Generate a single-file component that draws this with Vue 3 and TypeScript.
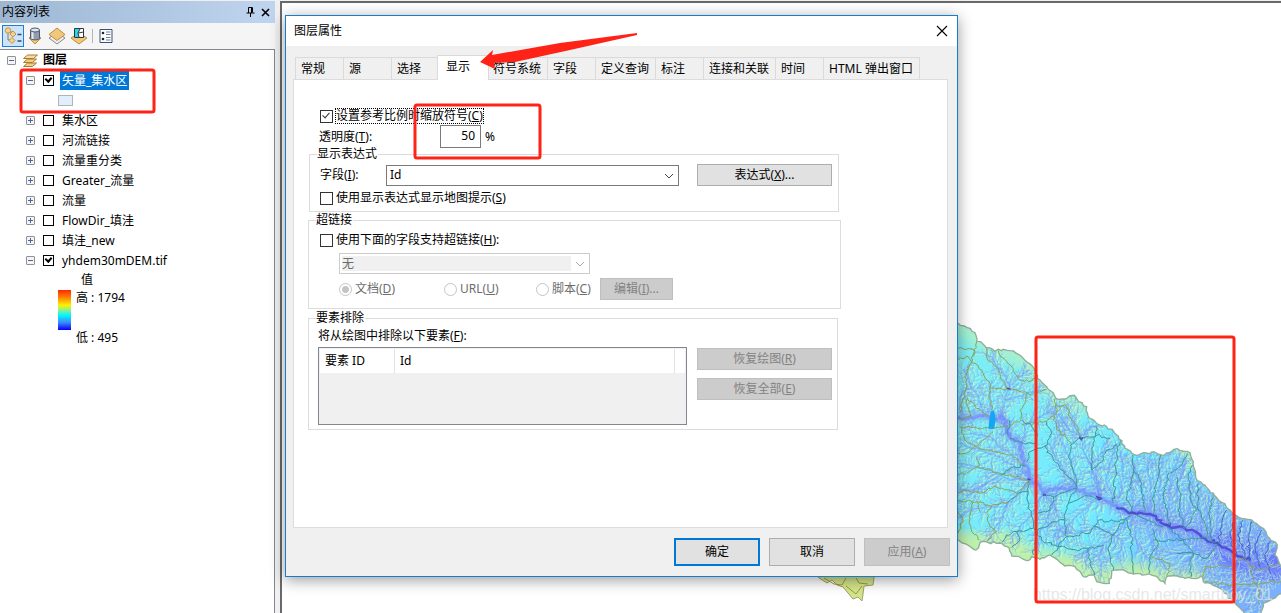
<script setup lang="ts">
import { ref } from 'vue'

interface Layer { name: string; checked: boolean; open: boolean; selected?: boolean }
type Pt = [number, number]

const layers = ref<Layer[]>([
  { name: '矢量_集水区', checked: true, open: true, selected: true },
  { name: '集水区', checked: false, open: false },
  { name: '河流链接', checked: false, open: false },
  { name: '流量重分类', checked: false, open: false },
  { name: 'Greater_流量', checked: false, open: false },
  { name: '流量', checked: false, open: false },
  { name: 'FlowDir_填洼', checked: false, open: false },
  { name: '填洼_new', checked: false, open: false },
  { name: 'yhdem30mDEM.tif', checked: true, open: true },
])

const tabs = ['常规', '源', '选择', '显示', '符号系统', '字段', '定义查询', '标注', '连接和关联', '时间', 'HTML 弹出窗口']
const activeTab = ref('显示')
const scaleSymbols = ref(true)
const mapTips = ref(false)
const hyperlinks = ref(false)
const transparency = ref('50')

let seed = 7
function rand(): number {
  seed = (seed * 16807) % 2147483647
  return seed / 2147483647
}

function parse(s: string): Pt[] {
  return s.split(' ').map((p) => p.split(',').map(Number) as Pt)
}

/* Midpoint displacement gives terrain lines their ragged look. */
function rough(pts: Pt[], amount: number): Pt[] {
  const out: Pt[] = [pts[0]]
  for (let i = 1; i < pts.length; i++) {
    const [ax, ay] = pts[i - 1]
    const [bx, by] = pts[i]
    const n = Math.max(1, Math.round(Math.hypot(bx - ax, by - ay) / 9))
    for (let k = 1; k <= n; k++) {
      const t = k / n
      const j = k === n ? 0 : amount
      out.push([ax + (bx - ax) * t + (rand() - 0.5) * j, ay + (by - ay) * t + (rand() - 0.5) * j])
    }
  }
  return out
}

function toPath(pts: Pt[]): string {
  return 'M' + pts.map(([x, y]) => `${x.toFixed(0)} ${y.toFixed(0)}`).join('L')
}

const outline = toPath(rough(parse('0,32 24,40 50,52 75,68 80,94 92,95 108,112 128,118 134,124 145,118 180,122 205,133 232,157 252,175 262,205 290,230 318,265 352,264 372,256 385,275 410,290 413,315 448,345 470,350 505,378 525,415 555,435 605,426 640,437 682,416 712,424 730,455 742,512 765,525 795,558 848,610 875,625 905,630 940,655 962,690 982,705 975,735 993,770 1000,850 965,868 940,880 935,915 885,915 855,880 825,850 800,830 760,815 755,798 725,805 655,798 645,820 625,805 597,792 550,792 520,780 485,783 478,820 440,815 432,795 400,800 375,770 345,768 300,735 270,748 245,740 235,752 185,738 178,715 155,700 95,695 78,720 24,690 0,680'), 7)) + 'Z'

const riverPts = parse('0,325 24,322 120,322 160,325 180,385 215,400 215,440 240,505 280,550 330,535 380,535 430,550 500,590 550,608 600,612 640,642 700,655 760,680 805,705 850,730 900,755 1000,790')
const river = toPath(rough(riverPts, 14))
const channel = toPath(rough(parse('500,592 545,608 600,612 620,630 645,645 705,656 765,685 810,706 870,740 900,752'), 12))

const streamPts: Pt[][] = [
  '180,385 150,320 165,270 178,235 170,200 130,150 110,130',
  '178,235 205,200 240,180', '100,320 85,260 60,220 40,180', '165,270 230,250 285,240',
  '215,400 230,340 290,310 310,290', '125,320 120,250 125,210',
  '240,505 190,510 155,495 80,470 24,460', '155,495 110,520 50,560',
  '240,505 200,560 175,575 125,590 60,600 24,620', '175,575 160,620 130,660 115,690',
  '240,505 150,440 90,420 30,400', '215,440 160,420 120,380 60,370',
  '280,550 250,610 210,650 180,700', '280,550 320,600 330,660 320,710', '330,535 300,600 270,670 260,720',
  '380,535 340,480 310,430 295,400', '380,535 360,440 330,390 320,300',
  '430,485 400,420 392,385 370,340 350,280', '450,560 425,485 435,450 480,400', '392,385 420,350 440,350',
  '392,385 350,350 325,310', '450,560 440,500 425,485', '500,590 470,520 480,460 500,400',
  '500,590 520,500 510,420', '550,608 545,520 555,460', '600,612 570,530 550,450',
  '600,612 600,540 595,480 605,430', '640,642 625,560 630,500 635,440', '650,642 660,570 660,500 690,430',
  '700,655 690,590 680,520 710,450', '700,655 720,580 720,500', '760,680 745,600 745,540',
  '780,685 770,620 775,560', '805,705 800,640 805,580', '850,730 835,670 830,620',
  '870,740 860,680 865,640', '900,755 885,700 885,650', '920,760 915,700 920,660', '950,770 940,730 950,690',
  '550,608 490,675 460,705 415,720 370,740', '490,675 440,650 380,670 300,660', '490,675 520,700 500,750',
  '460,705 450,750 455,800', '415,720 410,770', '450,560 400,600 360,640 340,680', '550,608 560,690 590,750',
  '640,642 600,680 610,720 650,780', '805,705 730,730 680,730 620,720', '730,730 700,770 690,795',
  '805,705 790,750 760,790', '900,755 870,790 810,800 780,790', '960,780 930,840 910,900',
  '930,840 870,835 820,830', '950,775 925,800 890,820', '40,320 30,270 40,240', '0,540 70,540 110,520',
].map(parse)
const streams = streamPts.map((s) => toPath(rough(s, 8)))

/* Feathered gullies on both sides of every stream. */
const veinSegments: string[] = []
function grow(x: number, y: number, angle: number, length: number, depth: number): void {
  const steps = Math.ceil(length / 6)
  let d = `M${x.toFixed(0)} ${y.toFixed(0)}`
  for (let i = 0; i < steps; i++) {
    angle += (rand() - 0.5) * 0.6
    x += Math.cos(angle) * 6
    y += Math.sin(angle) * 6
    d += `L${x.toFixed(0)} ${y.toFixed(0)}`
    if (depth > 0 && i % 2 === 1) {
      grow(x, y, angle + (rand() < 0.5 ? -0.7 : 0.7), length * 0.4, depth - 1)
    }
  }
  veinSegments.push(d)
}
for (const s of [riverPts, ...streamPts]) {
  for (let i = 1; i < s.length; i++) {
    const [ax, ay] = s[i - 1]
    const [bx, by] = s[i]
    const len = Math.hypot(bx - ax, by - ay)
    const dir = Math.atan2(by - ay, bx - ax)
    for (let t = 0; t < len; t += 14) {
      for (const side of [-1, 1]) {
        grow(ax + ((bx - ax) * t) / len, ay + ((by - ay) * t) / len, dir + side * (0.5 + rand() * 0.4), 18 + rand() * 26, 1)
      }
    }
  }
}
const veins = veinSegments.join('')

const basins = [
  '24,115 70,118 68,150 50,180 45,260 28,310', '24,150 50,138 75,160 118,215 120,235 178,238',
  '80,95 70,140', '108,112 112,145 150,190 170,235', '145,122 180,165 205,205 235,215 262,205',
  '178,238 225,245 240,255 290,238', '230,250 228,275 210,300 213,330 180,345',
  '50,262 75,290 115,320', '118,235 125,300', '178,330 175,378', '24,325 60,322 50,270',
  '180,385 220,400 258,400', '28,350 70,352 125,355 175,345', '35,350 45,390 80,410 130,425 185,435 225,468',
  '24,430 60,425 85,405 130,365', '24,495 50,490 90,465 78,440', '24,545 60,545 100,548 130,530 200,550 240,510',
  '24,572 80,575 125,588 175,575', '25,605 40,635 24,670', '70,575 58,620 65,665 85,690',
  '125,588 110,610 120,650 140,665 110,695', '80,575 90,605', '175,575 205,550 235,545', '235,510 232,570 245,620 260,665 250,735',
  '155,698 170,675 200,665 250,655', '200,665 210,690 185,712', '80,470 150,490 240,510', '155,492 190,470 225,468',
  '315,265 320,310 285,335 215,345', '318,285 350,290 360,320 392,380', '310,315 320,360 365,400',
  '290,335 305,370 285,410 310,450 380,530', '392,385 362,405 355,440 372,490 380,530', '440,350 430,400 425,480',
  '425,480 455,455 470,420 500,405', '510,385 500,430 498,480 490,580', '392,385 440,375 480,385',
  '548,435 550,490 530,560 550,608', '550,480 575,520 585,610', '632,435 625,500 612,550 610,612',
  '712,430 690,470 655,490 640,560 655,645', '680,500 692,560 685,600 705,655', '728,465 715,500 720,560 740,600 705,655',
  '745,520 742,590 765,640 770,680', '790,560 775,610 785,690', '830,600 815,650 805,700',
  '855,615 840,680 860,740', '880,630 865,670 885,740', '905,635 895,690 900,750', '935,660 915,710 930,770', '960,695 945,740 965,790',
  '280,550 310,560 380,535', '380,535 355,580 345,625 350,680 325,710', '350,680 420,670 430,650 490,675',
  '345,625 300,640 262,665', '262,665 275,690 325,710 305,735', '490,675 510,640 545,615',
  '430,650 445,630 500,635 530,625', '490,675 475,720 490,780', '415,715 420,760 435,795', '325,710 390,720 415,715 460,705',
  '530,630 545,680 545,750 550,790', '550,610 640,650', '610,660 625,700 600,740 597,790', '610,690 700,690 730,730',
  '600,740 660,760 650,800', '730,730 720,765 725,800', '760,800 765,770 850,765 880,745', '765,815 850,825 920,820 993,815',
  '880,740 900,770 945,780 993,760', '905,765 910,800 930,850 925,880', '310,560 300,600 262,610', '450,565 400,560 355,580',
  '230,455 240,425 290,405', '262,380 245,350 215,330', '650,650 700,690 770,685 810,700', '680,730 730,730 770,745 805,705',
].map((s) => {
  const pts = parse(s)
  const [x, y] = pts[0]
  const high = x < 130 || (x < 350 && y < 320) || y > 730
  return { d: toPath(rough(pts, 9)), color: high ? '#8aa45c' : x > 790 ? '#3f63c4' : '#379a98' }
})

const patch = toPath(rough(parse('815,572 819,578 827,583 832,580 837,585 843,587 853,599 858,597 862,601 864,586 873,585 874,578 874,572'), 1)) + 'Z'
</script>

<template>
  <div class="app">
    <aside class="contents">
      <header class="contents-title">
        <span>内容列表</span>
        <button class="tool-btn" aria-label="固定">
          <svg width="9" height="10" viewBox="0 0 9 10"><path d="M2.500 0.500h4v5M5.500 1v5M2.500 0.500V6M0.500 6h8M4.500 6v4" fill="none" stroke="#000" /></svg>
        </button>
        <button class="tool-btn" aria-label="关闭">
          <svg width="9" height="9" viewBox="0 0 9 9"><path d="M1 1l7 7M8 1L1 8" stroke="#000" stroke-width="1.600" /></svg>
        </button>
      </header>
      <nav class="toolbar">
        <button class="view on" aria-label="按绘制顺序列出">
          <svg width="18" height="18" viewBox="0 0 18 18">
            <path d="M4 6v7h5M6 5h3l1 2" fill="none" stroke="#9a7b3f" />
            <circle cx="4" cy="3.500" r="2.700" fill="#f6d28d" stroke="#c4914a" />
            <path d="M9 4l3 3-3 3-3-3z" fill="#f6d28d" stroke="#c4914a" />
            <path d="M8 10.500l3 3-3 3-3-3z" fill="#f6d28d" stroke="#c4914a" />
            <path d="M13.500 7.500h4M13.500 14h4" stroke="#334c7b" stroke-width="1.500" />
          </svg>
        </button>
        <button class="view" aria-label="按源列出">
          <svg width="18" height="18" viewBox="0 0 18 18">
            <path d="M3 11l6-4 6 4-6 6z" fill="#f2c879" stroke="#b98d43" />
            <path d="M4.500 3v8c0 2.500 9 2.500 9 0V3z" fill="#8f9db0" stroke="#4d596b" />
            <path d="M6.500 5v7" stroke="#e4eaf2" stroke-width="2" />
            <ellipse cx="9" cy="3" rx="4.500" ry="2" fill="#dde5ef" stroke="#4d596b" />
          </svg>
        </button>
        <button class="view" aria-label="按可见性列出">
          <svg width="18" height="18" viewBox="0 0 18 18">
            <path d="M1 11l8-5 8 5-8 6z" fill="#eee" stroke="#888" />
            <path d="M1 7.500L9 1l8 6.500-8 6z" fill="#f2c77c" stroke="#b98d43" />
          </svg>
        </button>
        <button class="view" aria-label="按选择列出">
          <svg width="18" height="18" viewBox="0 0 18 18">
            <path d="M1 11l8-5 8 5-8 6z" fill="#f2c77c" stroke="#b98d43" />
            <path d="M4.500 1.500h9v9h-9z" fill="#fff" stroke="#333" />
            <path d="M5 2h5l-2 4 1 4H5z" fill="#24d8ef" />
            <path d="M10 2L8 6l1 4M8.500 6l5-1" fill="none" stroke="#333" />
          </svg>
        </button>
        <span class="sep"></span>
        <button class="view" aria-label="选项">
          <svg width="14" height="16" viewBox="0 0 14 16">
            <path d="M1 1.500h12v13H1z" fill="#fff" stroke="#38507a" />
            <path d="M7 4h4.500M7 6.500h4.500M7 9.500h4.500M7 12h4.500" stroke="#6b7f9f" />
            <circle cx="4" cy="5" r="1.300" fill="#222" /><circle cx="4" cy="11" r="1.300" fill="#222" />
          </svg>
        </button>
      </nav>
      <div class="tree">
        <div class="row root">
          <button class="twist" aria-label="折叠"></button>
          <svg width="17" height="15" viewBox="0 0 17 15">
            <path d="M1.500 13.500l4-3.500h9l-4 3.500z" fill="#f4cd86" stroke="#a67c35" />
            <path d="M1.500 9.500L5.500 6h9l-4 3.500z" fill="#f4cd86" stroke="#a67c35" />
            <path d="M1.500 5.500L5.500 2h10l-4 3.500z" fill="#f9dca2" stroke="#a67c35" />
          </svg>
          <b>图层</b>
        </div>
        <template v-for="(layer, i) in layers" :key="layer.name">
          <div class="row child">
            <button class="twist" :class="{ plus: !layer.open }" :aria-label="layer.open ? '折叠' : '展开'"></button>
            <input :id="'layer' + i" v-model="layer.checked" class="tick bold" type="checkbox" />
            <label :for="'layer' + i" :class="{ selected: layer.selected }">{{ layer.name }}</label>
          </div>
          <div v-if="i === 0" class="row symbol"><span class="swatch"></span></div>
        </template>
        <div class="row value">值</div>
        <div class="legend">
          <span class="ramp"></span>
          <div class="range"><span>高 : 1794</span><span>低 : 495</span></div>
        </div>
      </div>
    </aside>

    <main class="map">
      <svg class="terrain" viewBox="282 3 999 610" preserveAspectRatio="xMaxYMin meet">
        <defs>
          <clipPath id="basin"><path :d="outline" /></clipPath>
          <filter id="soft" x="-20%" y="-20%" width="140%" height="140%"><feGaussianBlur stdDeviation="17" /></filter>
          <filter id="glow" x="-20%" y="-20%" width="140%" height="140%"><feGaussianBlur stdDeviation="8" /></filter>
          <linearGradient id="relief" x1="0" y1="0" x2="1" y2="0.600">
            <stop offset="0" stop-color="#80eef2" /><stop offset="0.600" stop-color="#72eaff" /><stop offset="1" stop-color="#7bb0ff" />
          </linearGradient>
        </defs>
        <path :d="patch" fill="#d3e68c" stroke="#a3a067" />
        <path d="M824 578l10 6 8 1 4-7M846 586l10 8 6-8M856 578l3 5 9 1" fill="none" stroke="#a39a35" />
        <g transform="translate(950 310) scale(0.3333)">
          <g clip-path="url(#basin)" fill="none" stroke-linejoin="round">
            <path :d="outline" fill="url(#relief)" />
            <path d="M0 685L78 705L160 690L240 745L370 765L440 810L550 785L650 810L760 810" stroke="#c4f0a4" stroke-width="60" filter="url(#soft)" />
            <path d="M0 30L90 90L240 160L320 260L410 300" stroke="#b5f1c0" stroke-width="35" filter="url(#soft)" />
            <path d="M680 420l40 20 10 40" stroke="#c5efb0" stroke-width="16" filter="url(#glow)" />
            <path d="M540 600L700 655L850 730L1000 790" stroke="#7486ff" stroke-width="80" opacity="0.600" filter="url(#soft)" />
            <path d="M790 690L860 725L1000 790" stroke="#6670ff" stroke-width="90" filter="url(#soft)" />
            <path :d="veins" stroke="#c8ffc4" stroke-width="3" opacity="0.500" transform="translate(5 4)" />
            <path :d="veins" stroke="#6f98ff" stroke-width="3" opacity="0.340" />
            <path v-for="(s, i) in streams" :key="'s' + i" :d="s" stroke="#7391ff" stroke-width="5" opacity="0.500" />
            <path :d="river" stroke="#7688ff" stroke-width="20" opacity="0.450" filter="url(#glow)" />
            <path :d="river" stroke="#727fff" stroke-width="9" opacity="0.550" />
            <path :d="channel" stroke="#4a44cc" stroke-width="7" opacity="0.850" />
            <path v-for="(b, i) in basins" :key="'b' + i" :d="b.d" :stroke="b.color" stroke-width="3" />
            <path d="M122 305l10-4 5 25-4 30-18 0 3-25z" fill="#16a5f3" />
            <path d="M440 560l15 5-8 5zM388 380l6 10 4-8M232 507l10 3M278 555l10 0M645 642l14 6 3-8M798 697l12 10M545 606l14 6M170 234l12 4" stroke="#4949b5" stroke-width="4" />
          </g>
          <path :d="outline" fill="none" stroke="#8fae9c" stroke-width="4" />
        </g>
      </svg>
      <span class="watermark">https://blog.csdn.net/smartboy_01</span>
    </main>

    <section class="dialog" role="dialog" aria-labelledby="dlg-title">
      <header class="dialog-title">
        <span id="dlg-title">图层属性</span>
        <button class="tool-btn" aria-label="关闭对话框">
          <svg width="12" height="12" viewBox="0 0 12 12"><path d="M1 1l10 10M11 1L1 11" stroke="#000" stroke-width="1.100" /></svg>
        </button>
      </header>
      <div class="dialog-body">
        <div class="tabs" role="tablist">
          <button v-for="t in tabs" :key="t" class="tab" role="tab" :class="{ active: t === activeTab }" :aria-selected="t === activeTab" @click="activeTab = t">{{ t }}</button>
        </div>
        <div class="page">
          <div class="line first">
            <input id="scale" v-model="scaleSymbols" class="tick" type="checkbox" />
            <label for="scale" class="focus">设置参考比例时缩放符号(<u>C</u>)</label>
          </div>
          <div class="line percent">
            <label for="trans">透明度(<u>T</u>):</label>
            <input id="trans" v-model="transparency" type="text" />
            <span>%</span>
          </div>

          <fieldset class="expression">
            <legend>显示表达式</legend>
            <div class="line field">
              <label for="field">字段(<u>I</u>):</label>
              <div class="select"><select id="field"><option>Id</option></select>
                <svg width="10" height="6" viewBox="0 0 10 6"><path d="M1 1l4 4 4-4" fill="none" stroke="#444" /></svg></div>
              <button class="btn wide">表达式(<u>X</u>)...</button>
            </div>
            <div class="line tips">
              <input id="tips" v-model="mapTips" class="tick" type="checkbox" />
              <label for="tips">使用显示表达式显示地图提示(<u>S</u>)</label>
            </div>
          </fieldset>

          <fieldset class="links">
            <legend>超链接</legend>
            <div class="line">
              <input id="links" v-model="hyperlinks" class="tick" type="checkbox" />
              <label for="links">使用下面的字段支持超链接(<u>H</u>):</label>
            </div>
            <div class="select off"><select aria-label="超链接字段" disabled><option>无</option></select>
              <svg width="10" height="6" viewBox="0 0 10 6"><path d="M1 1l4 4 4-4" fill="none" stroke="#aaa" /></svg></div>
            <div class="radios">
              <label><input type="radio" name="kind" checked disabled /><span>文档(<u>D</u>)</span></label>
              <label><input type="radio" name="kind" disabled /><span>URL(<u>U</u>)</span></label>
              <label><input type="radio" name="kind" disabled /><span>脚本(<u>C</u>)</span></label>
              <button class="btn" disabled>编辑(<u>I</u>)...</button>
            </div>
          </fieldset>

          <fieldset class="exclude">
            <legend>要素排除</legend>
            <p>将从绘图中排除以下要素(<u>F</u>):</p>
            <div class="exclude-body">
              <div class="list">
                <table>
                  <thead><tr><th class="id">要素 ID</th><th>Id</th><th class="end"></th></tr></thead>
                </table>
              </div>
              <div class="side">
                <button class="btn wide" disabled>恢复绘图(<u>R</u>)</button>
                <button class="btn wide" disabled>恢复全部(<u>E</u>)</button>
              </div>
            </div>
          </fieldset>
        </div>
        <footer>
          <button class="btn main default">确定</button>
          <button class="btn main">取消</button>
          <button class="btn main" disabled>应用(<u>A</u>)</button>
        </footer>
      </div>
    </section>

    <svg class="marks" aria-hidden="true">
      <g fill="none" stroke="#ff2216" stroke-width="3">
        <rect x="21" y="70" width="133" height="42" rx="2" />
        <rect x="415" y="105" width="125" height="53" rx="2" />
        <rect x="1036" y="337" width="198" height="265" rx="2" />
      </g>
      <path d="M480 62L493 50L492 55L560 43L637 33L637 35L570 50L515 62L494 63L495 69Z" fill="#ff2216" />
    </svg>
  </div>
</template>

<style>
body { margin: 0; }
</style>

<style scoped>
.app {
  position: relative;
  display: flex;
  gap: 5px;
  height: 100vh;
  overflow: hidden;
  background: #f0f0f0;
  color: #000;
  font: 12px/16px "Noto Sans", "Noto Sans CJK SC", sans-serif;
}
button, input, select { font: inherit; color: inherit; margin: 0; }
button { padding: 0; }
.tool-btn { display: flex; border: 0; background: none; padding: 3px; }

.contents { display: flex; flex-direction: column; width: 275px; flex: none; }
.contents-title {
  display: flex;
  align-items: center;
  height: 22px;
  margin-top: 1px;
  padding: 0 2px;
  background: linear-gradient(90deg, #9db7d3, #bfd4ef);
}
.contents-title span { flex: 1; }
.toolbar { display: flex; align-items: center; height: 26px; padding: 0 2px; background: #f5f5f5; }
.view {
  display: flex;
  align-items: center;
  justify-content: center;
  width: 22px;
  height: 22px;
  box-sizing: border-box;
  border: 1px solid transparent;
  background: none;
}
.view.on { border-color: #1f7fd8; background: #cce4f7; }
.sep { width: 1px; height: 14px; margin: 0 2px; background: #b5b5b5; }
.tree { flex: 1; background: #fff; border: solid #828790; border-width: 1px 1px 0 0; }
.row { display: flex; align-items: center; height: 20px; }
.root { padding-left: 7px; }
.root svg { margin: 0 4px 0 6px; }
.child { padding-left: 26px; }
.child .tick { margin: 0 6px 0 8px; }
.child label { padding: 0 2px; line-height: 19px; }
.child label.selected { background: #0078d7; color: #fff; }
.twist {
  position: relative;
  width: 9px;
  height: 9px;
  border: 1px solid #919191;
  border-radius: 1px;
  background: linear-gradient(#4b63a7, #4b63a7) center / 5px 1px no-repeat, #f4f4f4;
}
.twist.plus {
  background: linear-gradient(#4b63a7, #4b63a7) center / 5px 1px no-repeat,
    linear-gradient(#4b63a7, #4b63a7) center / 1px 5px no-repeat, #f4f4f4;
}
.symbol { padding-left: 58px; }
.swatch { width: 13px; height: 9px; border: 1px solid #aeb4ba; background: #e1effa; }
.value { padding-left: 81px; }
.legend { display: flex; gap: 5px; padding-left: 58px; }
.ramp { width: 13px; height: 40px; background: linear-gradient(#ff2600, #ff9400 22%, #fff200 38%, #8df28c 50%, #00f6ff 64%, #3f84ff 82%, #0000f5); }
.range { display: flex; flex-direction: column; justify-content: space-between; height: 56px; }

.map { position: relative; flex: 1; min-width: 0; margin-top: 1px; border: solid #696969; border-width: 2px 0 0 2px; background: #fff; overflow: hidden; }
.terrain { display: block; width: 100%; }
.watermark { position: absolute; right: 8px; bottom: 8px; font: 16px/20px "Liberation Sans", sans-serif; color: rgba(222, 226, 228, 0.8); }

.dialog {
  position: absolute;
  z-index: 0;
  left: 285px;
  top: 15px;
  width: 673px;
  box-sizing: border-box;
  border: 1px solid #1a7bcd;
  background: #f0f0f0;
  box-shadow: 0 3px 14px rgba(0, 0, 0, 0.4);
}
.dialog-title { display: flex; align-items: center; justify-content: space-between; height: 30px; padding: 0 6px 0 8px; background: #fff; }
.dialog-body { padding: 9px 7px 10px; }
.tabs { display: flex; align-items: flex-end; padding-left: 2px; }
.tab {
  height: 22px;
  min-width: 48px;
  box-sizing: border-box;
  padding: 0 6px 0 5px;
  border: solid #dadada;
  border-width: 1px 0 0 1px;
  background: #f0f0f0;
  text-align: left;
  white-space: nowrap;
}
.tab:last-child { border-right-width: 1px; }
.tab.active {
  z-index: 1;
  height: 25px;
  margin: 0 -2px -1px;
  min-width: 52px;
  padding: 0 8px 2px;
  border-right-width: 1px;
  background: #fff;
}
.page { margin-right: 2px; padding: 28px 15px 97px; border: 1px solid #dcdcdc; background: #fff; }
.line { display: flex; align-items: center; }
.tick {
  appearance: none;
  position: relative;
  flex: none;
  width: 13px;
  height: 13px;
  box-sizing: border-box;
  border: 1px solid #333;
  background: #fff;
}
.tick:checked::after {
  content: "";
  position: absolute;
  left: 3px;
  top: 0;
  width: 3px;
  height: 6px;
  border: solid #333;
  border-width: 0 1px 1px 0;
  transform: rotate(42deg);
}
.tick.bold { width: 11px; height: 11px; border-color: #000; }
.tick.bold:checked::after { left: 2px; height: 4px; border-color: #000; border-width: 0 2px 2px 0; }
.first { padding-left: 11px; gap: 2px; }
.focus { outline: 1px dotted #000; outline-offset: -1px; padding: 0 1px; }
.percent { padding-left: 10px; height: 19px; margin-top: 3px; }
.percent label { width: 121px; }
.percent input {
  width: 41px;
  height: 23px;
  box-sizing: border-box;
  padding: 0 5px 3px;
  border: 1px solid #7a7a7a;
  text-align: right;
}
.percent span { margin-left: 4px; }
fieldset { min-width: 0; margin: 0; border: 1px solid #dcdcdc; box-sizing: border-box; width: 530px; max-width: 100%; }
legend { margin: 0; padding: 0 1px 0 0; line-height: 16px; }
.tips, .links .line { gap: 3px; }
.expression { padding: 2px 6px 5px 7px; }
.expression .line { padding-left: 3px; }
.field label { width: 66px; }
.field .select { flex: 1; margin-right: 18px; }
.tips { margin-top: 4px; }
.select { position: relative; display: flex; height: 21px; box-sizing: border-box; border: 1px solid #7a7a7a; background: #fff; }
.select select { flex: 1; appearance: none; border: 0; background: none; padding: 0 3px; opacity: 1; }
.select svg { position: absolute; right: 4px; top: 7px; }
.btn { height: 22px; box-sizing: border-box; border: 1px solid #adadad; background: #e1e1e1; text-align: center; white-space: nowrap; }
.btn:disabled { background: #ccc; border-color: #bfbfbf; color: #838383; }
.wide { width: 135px; }
.links { width: 533px; margin-left: -1px; padding: 4px 5px 8px 7px; }
.links .line { padding-left: 4px; }
.select.off { width: 251px; margin: 5px 0 4px 23px; border-color: #ccc; color: #6d6d6d; }
.select.off select { margin: 2px 18px 2px 2px; padding: 0; background: #f0f0f0; }
.radios { display: grid; grid-template-columns: 105px 92px 64px 73px; align-items: center; padding-left: 23px; color: #6d6d6d; }
.radios label { display: flex; align-items: center; gap: 3px; white-space: nowrap; }
.radios input { appearance: none; width: 13px; height: 13px; box-sizing: border-box; border: 1px solid #c4c4c4; border-radius: 50%; background: #fff; }
.radios input:checked { background: radial-gradient(circle, #c4c4c4 3px, #fff 4px); }
.exclude { margin: 1px 0 0 -1px; padding: 2px 5px 4px 7px; }
.exclude p { margin: 0 0 3px 2px; }
.exclude-body { display: flex; gap: 10px; padding-left: 2px; }
.list { flex: 1; height: 78px; box-sizing: border-box; padding: 1px; border: 1px solid #828790; background: #f0f0f0; }
.list table { width: 100%; border-collapse: collapse; background: #fff; }
.list th { height: 24px; padding: 0 0 0 5px; text-align: left; font-weight: normal; border-right: 1px solid #e2e2e2; }
.list .id { width: 69px; }
.list .end { width: 5px; border: 0; }
.side { display: flex; flex-direction: column; gap: 8px; padding-top: 1px; }
footer { display: flex; justify-content: flex-end; gap: 9px; padding-top: 10px; }
.main { width: 86px; height: 28px; }
.default { border: 2px solid #0078d7; }
.marks { position: absolute; inset: 0; width: 100%; height: 100%; pointer-events: none; }
</style>
